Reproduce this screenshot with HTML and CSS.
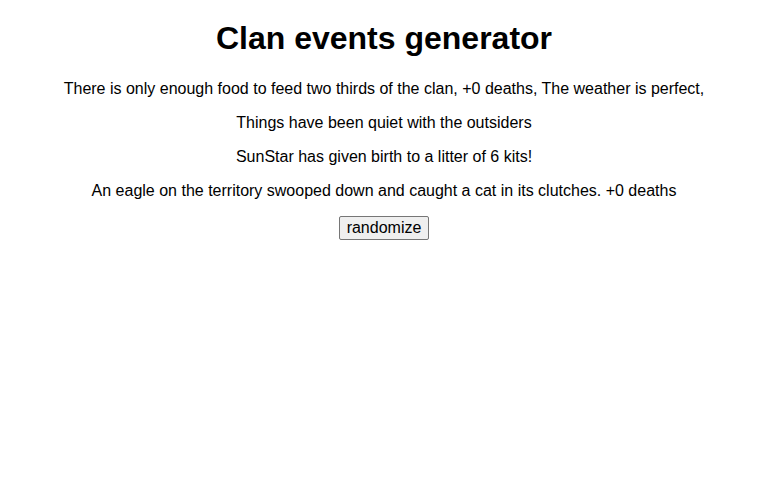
FILE: index.html
```html
<!DOCTYPE html>
<html>
<head>
<meta charset="utf-8">
<link rel="stylesheet" href="styles.css">
</head>
<body class="page">
<h1 class="title">Clan events generator</h1>
<p class="event">There is only enough food to feed two thirds of the clan, +0 deaths, The weather is perfect,</p>
<p class="event">Things have been quiet with the outsiders</p>
<p class="event">SunStar has given birth to a litter of 6 kits!</p>
<p class="event">An eagle on the territory swooped down and caught a cat in its clutches. +0 deaths</p>
<div class="actions"><button class="randomize">randomize</button></div>
</body>
</html>
```
FILE: styles.css
```css
.page {
  margin: 8px;
  font-family: "Liberation Sans", Arial, sans-serif;
  text-align: center;
  color: #000;
  background: #fff;
}
.title {
  font-size: 32px;
  font-weight: bold;
  margin: 12px 0 23px;
}
.event {
  font-size: 16px;
  margin: 16px 0;
  line-height: 18px;
}
.actions {
  margin-top: 16px;
}
.randomize {
  font-family: "Liberation Sans", Arial, sans-serif;
  font-size: 16px;
  line-height: 18px;
  padding: 2px 7px;
  background: #efefef;
  border: 1px solid #767676;
  border-radius: 2px;
  color: #000;
}
```
